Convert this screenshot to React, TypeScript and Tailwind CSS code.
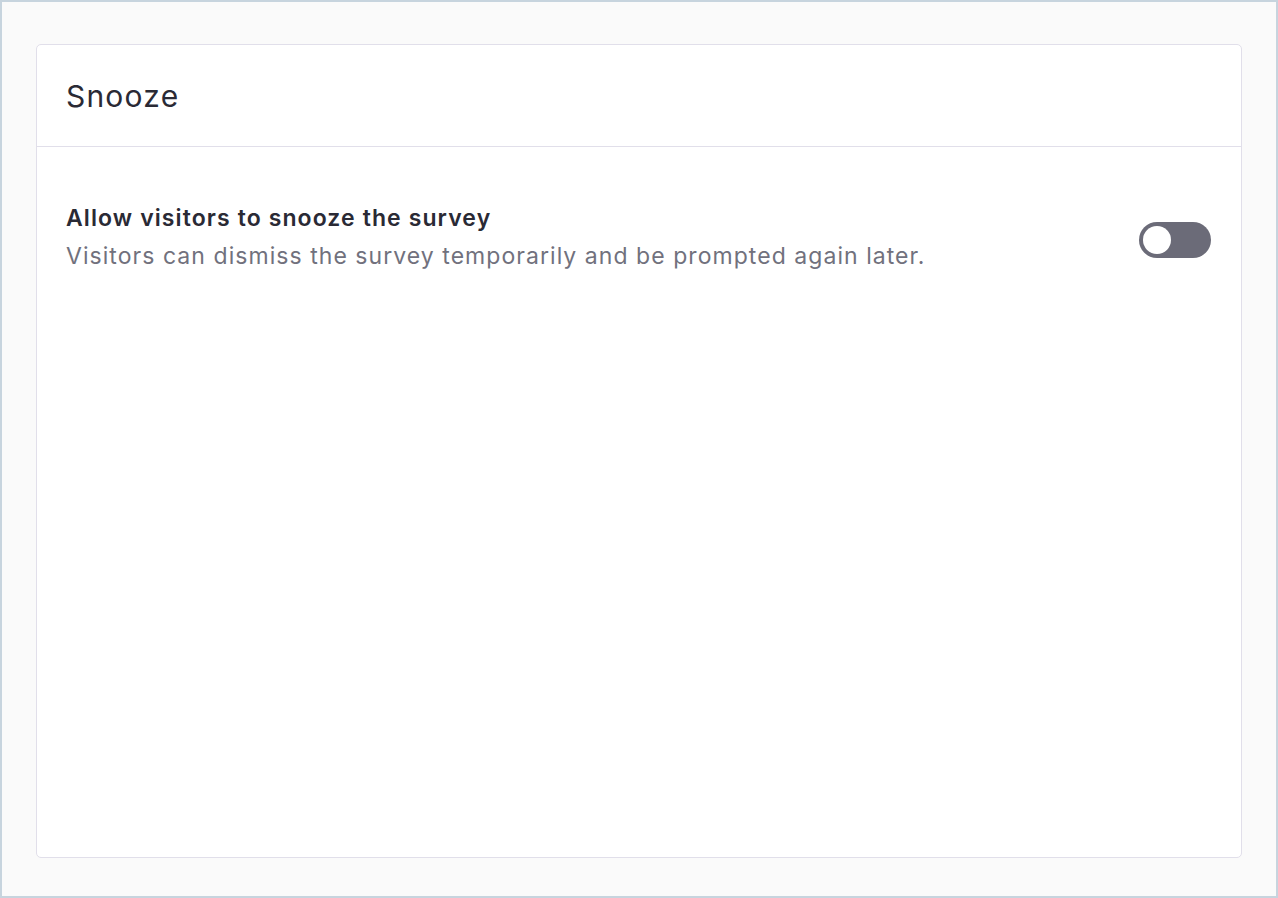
export default function App() {
  return (
    <div
      className="h-[898px] w-[1278px] border-2 border-[#c7d4de] bg-[#fafafa] px-[34px] pt-[42px] pb-[38px]"
      style={{ fontFamily: "Inter, 'Noto Sans', sans-serif" }}
    >
      <div className="flex h-full flex-col rounded-[5px] border border-[#e1dfea] bg-white">
        <div className="flex h-[102px] items-center border-b border-[#e1dfea] px-[29px]">
          <h1 className="pt-[2px] text-[30px] font-normal tracking-[1.2px] text-[#2a2a35]">Snooze</h1>
        </div>
        <div className="flex items-center justify-between pt-[56px] pr-[30px] pl-[29px]">
          <div className="flex flex-col">
            <span className="text-[23px] leading-[30px] font-semibold tracking-[1.1px] text-[#2a2a35]">
              Allow visitors to snooze the survey
            </span>
            <span className="mt-[7px] text-[23px] leading-[32px] tracking-[1.05px] text-[#71717d]">
              Visitors can dismiss the survey temporarily and be prompted again later.
            </span>
          </div>
          <button
            type="button"
            className="mt-[5px] flex h-[36px] w-[72px] items-center rounded-full bg-[#6b6b78] px-[4px]"
          >
            <span className="h-[28px] w-[28px] rounded-full bg-white" />
          </button>
        </div>
      </div>
    </div>
  );
}
